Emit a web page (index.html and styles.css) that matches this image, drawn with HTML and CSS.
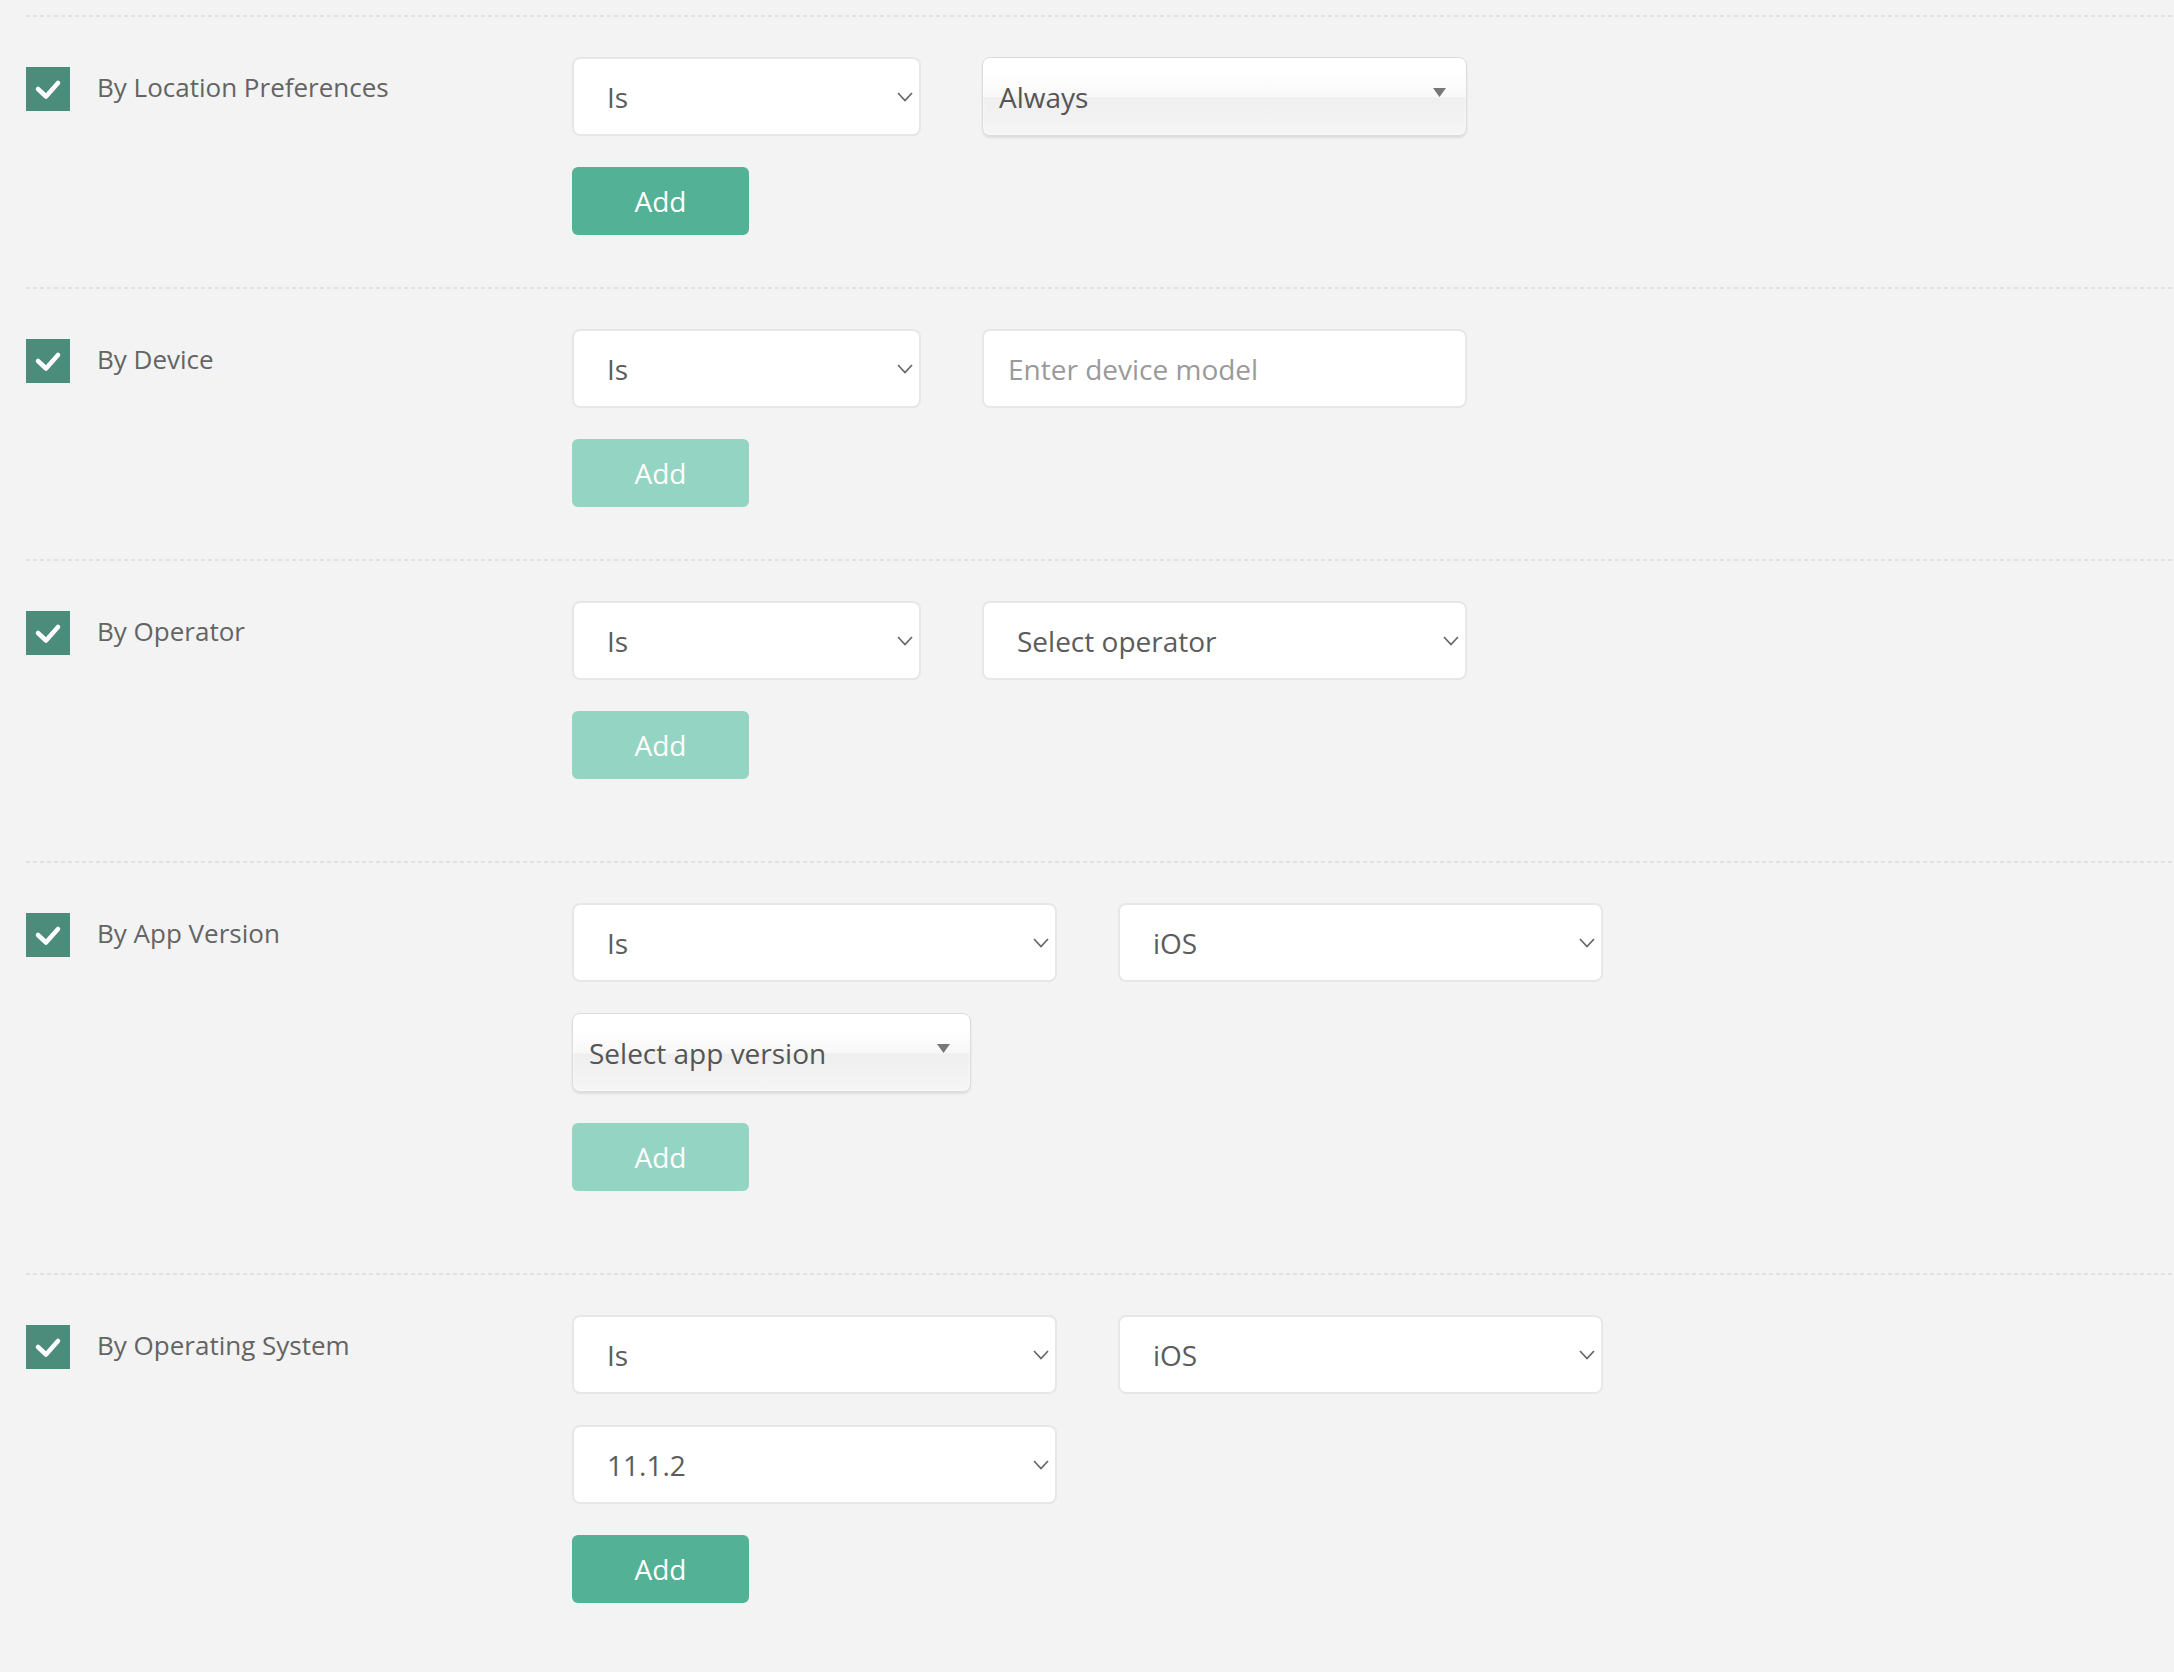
FILE: index.html
```html
<!DOCTYPE html>
<html lang="en">
<head>
<meta charset="utf-8">
<title>Filters</title>
<link rel="stylesheet" href="styles.css">
</head>
<body>
<div class="filters">

  <section class="filter">
    <div class="filter-label">
      <span class="checkbox"><svg viewBox="0 0 44 44" width="44" height="44"><path d="M12 22 L20 29.5 L32 16" fill="none" stroke="#fff" stroke-width="4.5" stroke-linecap="round" stroke-linejoin="round"/></svg></span>
      <span class="label-text">By Location Preferences</span>
    </div>
    <div class="filter-body">
      <div class="control-row">
        <div class="select select--narrow"><span>Is</span><svg class="chev" viewBox="0 0 16 10" width="16" height="10"><path d="M1 1 L8 8.5 L15 1" fill="none" stroke="#666" stroke-width="1.7"/></svg></div>
        <div class="chosen chosen--wide"><span>Always</span><svg class="tri" viewBox="0 0 13 9" width="13" height="9"><polygon points="0,0 13,0 6.5,9" fill="#777"/></svg></div>
      </div>
      <button class="btn">Add</button>
    </div>
  </section>

  <section class="filter">
    <div class="filter-label">
      <span class="checkbox"><svg viewBox="0 0 44 44" width="44" height="44"><path d="M12 22 L20 29.5 L32 16" fill="none" stroke="#fff" stroke-width="4.5" stroke-linecap="round" stroke-linejoin="round"/></svg></span>
      <span class="label-text">By Device</span>
    </div>
    <div class="filter-body">
      <div class="control-row">
        <div class="select select--narrow"><span>Is</span><svg class="chev" viewBox="0 0 16 10" width="16" height="10"><path d="M1 1 L8 8.5 L15 1" fill="none" stroke="#666" stroke-width="1.7"/></svg></div>
        <input class="text-input" type="text" placeholder="Enter device model">
      </div>
      <button class="btn btn--disabled">Add</button>
    </div>
  </section>

  <section class="filter filter--tall">
    <div class="filter-label">
      <span class="checkbox"><svg viewBox="0 0 44 44" width="44" height="44"><path d="M12 22 L20 29.5 L32 16" fill="none" stroke="#fff" stroke-width="4.5" stroke-linecap="round" stroke-linejoin="round"/></svg></span>
      <span class="label-text">By Operator</span>
    </div>
    <div class="filter-body">
      <div class="control-row">
        <div class="select select--narrow"><span>Is</span><svg class="chev" viewBox="0 0 16 10" width="16" height="10"><path d="M1 1 L8 8.5 L15 1" fill="none" stroke="#666" stroke-width="1.7"/></svg></div>
        <div class="select select--wide"><span>Select operator</span><svg class="chev" viewBox="0 0 16 10" width="16" height="10"><path d="M1 1 L8 8.5 L15 1" fill="none" stroke="#666" stroke-width="1.7"/></svg></div>
      </div>
      <button class="btn btn--disabled">Add</button>
    </div>
  </section>

  <section class="filter filter--tall">
    <div class="filter-label">
      <span class="checkbox"><svg viewBox="0 0 44 44" width="44" height="44"><path d="M12 22 L20 29.5 L32 16" fill="none" stroke="#fff" stroke-width="4.5" stroke-linecap="round" stroke-linejoin="round"/></svg></span>
      <span class="label-text">By App Version</span>
    </div>
    <div class="filter-body">
      <div class="control-row">
        <div class="select select--wide"><span>Is</span><svg class="chev" viewBox="0 0 16 10" width="16" height="10"><path d="M1 1 L8 8.5 L15 1" fill="none" stroke="#666" stroke-width="1.7"/></svg></div>
        <div class="select select--wide"><span>iOS</span><svg class="chev" viewBox="0 0 16 10" width="16" height="10"><path d="M1 1 L8 8.5 L15 1" fill="none" stroke="#666" stroke-width="1.7"/></svg></div>
      </div>
      <div class="chosen chosen--mid"><span>Select app version</span><svg class="tri" viewBox="0 0 13 9" width="13" height="9"><polygon points="0,0 13,0 6.5,9" fill="#777"/></svg></div>
      <button class="btn btn--disabled">Add</button>
    </div>
  </section>

  <section class="filter filter--tall">
    <div class="filter-label">
      <span class="checkbox"><svg viewBox="0 0 44 44" width="44" height="44"><path d="M12 22 L20 29.5 L32 16" fill="none" stroke="#fff" stroke-width="4.5" stroke-linecap="round" stroke-linejoin="round"/></svg></span>
      <span class="label-text">By Operating System</span>
    </div>
    <div class="filter-body">
      <div class="control-row">
        <div class="select select--wide"><span>Is</span><svg class="chev" viewBox="0 0 16 10" width="16" height="10"><path d="M1 1 L8 8.5 L15 1" fill="none" stroke="#666" stroke-width="1.7"/></svg></div>
        <div class="select select--wide"><span>iOS</span><svg class="chev" viewBox="0 0 16 10" width="16" height="10"><path d="M1 1 L8 8.5 L15 1" fill="none" stroke="#666" stroke-width="1.7"/></svg></div>
      </div>
      <div class="select select--wide"><span>11.1.2</span><svg class="chev" viewBox="0 0 16 10" width="16" height="10"><path d="M1 1 L8 8.5 L15 1" fill="none" stroke="#666" stroke-width="1.7"/></svg></div>
      <button class="btn">Add</button>
    </div>
  </section>

</div>
</body>
</html>
```
FILE: styles.css
```css
html, body {
  margin: 0;
  padding: 0;
  background: #f3f3f3;
  min-height: 100%;
}

body {
  font-family: "Open Sans", "Liberation Sans", sans-serif;
  color: #5c5c5c;
}

.filters {
  padding: 15px 0 0 26px;
}

.filter {
  display: flex;
  padding: 42px 0 52px;
  background-image: repeating-linear-gradient(to right, #e1e1e1 0 4px, transparent 4px 7px);
  background-size: 100% 2px;
  background-repeat: no-repeat;
  background-position: top left;
}

.filter--tall {
  padding-bottom: 82px;
}

.filter-label {
  width: 546px;
  flex-shrink: 0;
  display: flex;
  align-items: flex-start;
  padding-top: 10px;
}

.checkbox {
  width: 44px;
  height: 44px;
  background: #4b8c7b;
  display: block;
  flex-shrink: 0;
}

.checkbox svg {
  display: block;
}

.label-text {
  margin-left: 27px;
  font-size: 26px;
  line-height: 40px;
  color: #646464;
}

.filter-body {
  display: flex;
  flex-direction: column;
  align-items: flex-start;
  gap: 31px;
}

.control-row {
  display: flex;
  gap: 61px;
}

.select {
  box-sizing: border-box;
  height: 79px;
  background: #fff;
  border: 2px solid #e7e7e7;
  border-radius: 8px;
  display: flex;
  align-items: center;
  justify-content: space-between;
  padding: 0 6px 0 33px;
  font-size: 28px;
  color: #5c5c5c;
}

.select--narrow {
  width: 349px;
}

.select--wide {
  width: 485px;
}

.chev {
  display: block;
  flex-shrink: 0;
}

.chosen {
  box-sizing: border-box;
  height: 79px;
  border: 1px solid #dcdcdc;
  border-radius: 8px;
  background: linear-gradient(#fff 20%, #f8f8f8 50%, #efefef 52%, #f5f5f5 100%);
  box-shadow: inset 0 0 3px #fff, 0 2px 2px rgba(0, 0, 0, 0.09);
  display: flex;
  align-items: center;
  justify-content: space-between;
  padding: 0 20px 0 16px;
  font-size: 28px;
  color: #555;
}

.chosen--wide {
  width: 485px;
}

.chosen--mid {
  width: 399px;
}

.tri {
  display: block;
  margin-top: -9px;
  flex-shrink: 0;
}

.text-input {
  box-sizing: border-box;
  width: 485px;
  height: 79px;
  background: #fff;
  border: 2px solid #e7e7e7;
  border-radius: 8px;
  padding: 0 0 0 24px;
  font-family: "Open Sans", "Liberation Sans", sans-serif;
  font-size: 28px;
  color: #5c5c5c;
  outline: none;
}

.text-input::placeholder {
  color: #9a9a9a;
}

.btn {
  width: 177px;
  height: 68px;
  border: none;
  border-radius: 6px;
  background: #53b195;
  color: #fff;
  font-family: "Open Sans", "Liberation Sans", sans-serif;
  font-size: 28px;
  padding: 0;
  cursor: pointer;
}

.btn--disabled {
  background: #93d4c2;
}
```
